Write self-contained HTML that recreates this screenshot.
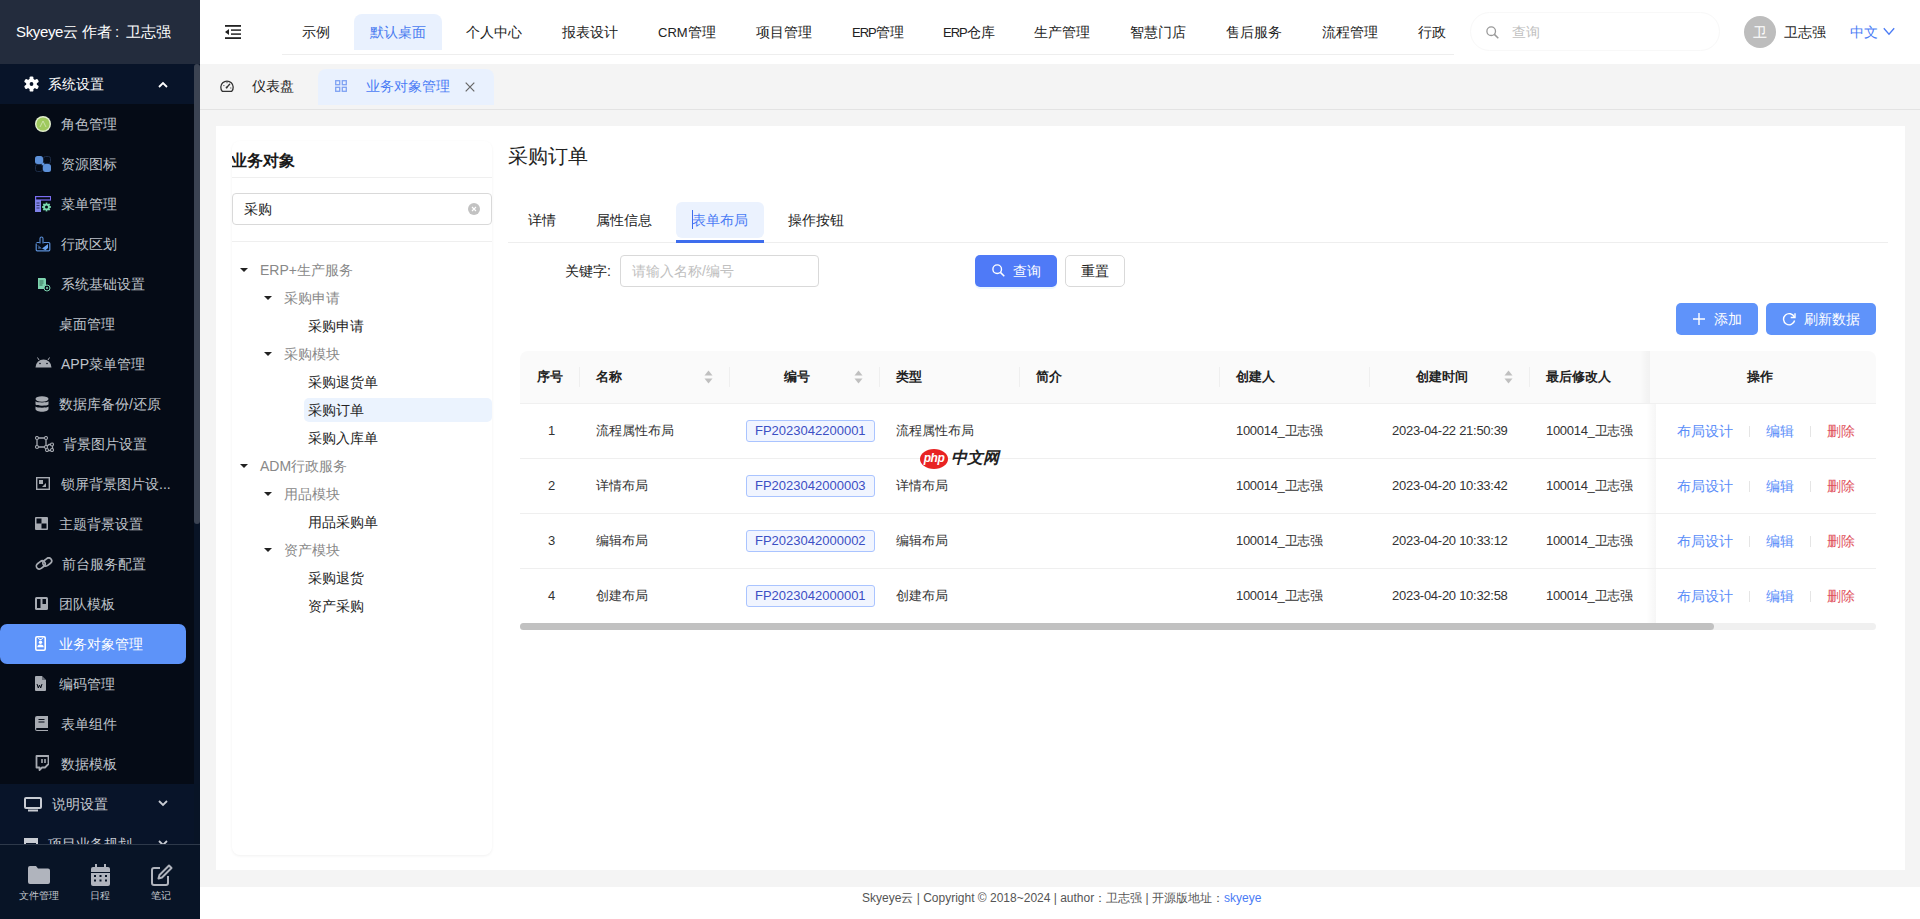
<!DOCTYPE html>
<html><head><meta charset="utf-8">
<style>
*{box-sizing:border-box;margin:0;padding:0}
html,body{width:1920px;height:919px;overflow:hidden;background:#f4f4f4;font-family:"Liberation Sans",sans-serif;font-size:14px;color:#333}
.abs{position:absolute}
.t{position:absolute;white-space:nowrap;line-height:20px}
svg{display:block}
/* sidebar */
#side{position:absolute;left:0;top:0;width:200px;height:919px;background:#081426;overflow:hidden}
#logo{position:absolute;left:0;top:0;width:200px;height:64px;background:#232c3d;color:#fff;font-size:15px;line-height:64px;padding-left:16px;white-space:nowrap}
#sub1{position:absolute;left:0;top:64px;width:194px;height:40px;background:#081429;color:#fff}
#items{position:absolute;left:0;top:104px;width:194px;height:680px;background:#050b16}
.it{position:absolute;left:0;width:194px;height:40px;color:#bfc3cb;line-height:40px;white-space:nowrap}
.it .tx{position:absolute;left:61px;top:0}
.it .ic{position:absolute;left:35px;top:12px;width:16px;height:16px}
.it.act{background:#5d93f9;color:#fff;width:186px;border-radius:7px}
#sbtrack{position:absolute;left:194px;top:64px;width:6px;height:720px;background:#091426}
#sbthumb{position:absolute;left:194px;top:64px;width:6px;height:460px;background:#3b4352;border-radius:3px}
.grp{position:absolute;left:0;width:194px;height:40px;background:#081429;color:#c8ccd3;line-height:40px}
#bot{position:absolute;left:0;top:844px;width:200px;height:75px;background:#081426;border-top:1px solid #2e394a}
.bi{position:absolute;top:45px;width:60px;text-align:center;color:#c5c9d0;font-size:9.5px;line-height:12px}
/* header */
#hdr{position:absolute;left:0;top:0;width:1920px;height:64px}
.nav{position:absolute;top:22px;color:#222;white-space:nowrap;line-height:20px}
#tabs{position:absolute;left:200px;top:64px;width:1720px;height:46px;background:#f4f4f4;border-bottom:1px solid #e3e3e3}
#main{position:absolute;left:216px;top:126px;width:1689px;height:744px;background:#fff}
#foot{position:absolute;left:200px;top:887px;width:1720px;height:32px;background:#fff}
.card{position:absolute;left:232px;top:141px;width:260px;height:714px;background:#fff;border-radius:8px;box-shadow:0 1px 3px rgba(0,0,0,.06);overflow:hidden}
.tn{position:absolute;white-space:nowrap;line-height:20px;color:#888}
.tl{position:absolute;white-space:nowrap;line-height:20px;color:#222}
.arr{position:absolute;width:0;height:0;border-left:4px solid transparent;border-right:4px solid transparent;border-top:4.5px solid #222}
.th{position:absolute;font-weight:bold;font-size:13px;color:#222;white-space:nowrap;line-height:20px;top:367px}
.td{position:absolute;font-size:13px;color:#333;white-space:nowrap;line-height:20px}
.cdiv{position:absolute;top:367px;width:1px;height:20px;background:#efefef}
.rline{position:absolute;left:520px;width:1356px;height:1px;background:#efefef}
.tag{position:absolute;left:746px;width:129px;height:22px;border:1px solid #aac4ff;background:#f1f5ff;border-radius:3px;color:#3c4fc4;font-size:13px;line-height:20px;padding-left:8px}
.sort{position:absolute;top:370px;width:9px;height:14px}
.lk{position:absolute;font-size:14px;color:#5b8ef9;white-space:nowrap;line-height:20px}
.dl{position:absolute;font-size:14px;color:#e0515c;white-space:nowrap;line-height:20px}
.vd{position:absolute;width:1px;height:11px;background:#e5e5e5}
.btn{position:absolute;border-radius:5px;color:#fff;white-space:nowrap}
</style></head><body>
<div id="side">
  <div id="logo"><span style="letter-spacing:-.35px">Skyeye</span>云<span style="margin-left:4px">作者</span><span style="display:inline-block;width:14px;padding-left:3px">:</span>卫志强</div>
  <div id="sub1">
    <svg class="abs" style="left:24px;top:76px;top:12px" width="15" height="16" viewBox="0 0 15 16"><g fill="#fff" transform="translate(7.5 8)"><circle r="5.4"/><rect x="-1.9" y="-7.6" width="3.8" height="15.2" rx="1.2"/><rect x="-1.9" y="-7.6" width="3.8" height="15.2" rx="1.2" transform="rotate(60)"/><rect x="-1.9" y="-7.6" width="3.8" height="15.2" rx="1.2" transform="rotate(120)"/></g><circle cx="7.5" cy="8" r="1.9" fill="#081429"/></svg>
    <div class="abs" style="left:48px;top:0;line-height:40px">系统设置</div>
    <svg class="abs" style="left:158px;top:17px" width="10" height="7" viewBox="0 0 10 7"><path d="M1 6L5 2L9 6" stroke="#fff" stroke-width="1.8" fill="none"/></svg>
  </div>
  <div id="items">
    <div class="it" style="top:0"><svg class="ic" viewBox="0 0 16 16"><circle cx="8" cy="8" r="8" fill="#e3efcf"/><circle cx="8" cy="8" r="6.6" fill="#9fc95e"/><path d="M5 11l3-6 3 6" stroke="#d7e9bd" stroke-width=".8" fill="none"/></svg><span class="tx">角色管理</span></div>
    <div class="it" style="top:40px"><svg class="ic" viewBox="0 0 16 16"><rect x="0" y="0" width="8" height="8" rx="2.5" fill="#5d91d9"/><rect x="8" y="8" width="8" height="8" rx="2.5" fill="#5d91d9"/><path d="M6 8L8 6L10 8L8 10z" fill="#5d91d9"/><rect x="8.5" y="0.5" width="7" height="7" rx="2" fill="none" stroke="#1d2d48"/><rect x="0.5" y="8.5" width="7" height="7" rx="2" fill="none" stroke="#1d2d48"/></svg><span class="tx">资源图标</span></div>
    <div class="it" style="top:80px"><svg class="ic" viewBox="0 0 16 16"><rect x="0.6" y="0.6" width="15" height="3.4" fill="none" stroke="#7a6df2" stroke-width="1.2"/><rect x="0" y="4" width="6" height="12" fill="#7f82e8"/><path d="M1.5 7h3M1.5 9.5h3M1.5 12h3" stroke="#2b2f5a" stroke-width=".9"/><g transform="translate(11.5 11)" fill="#7ad9b0"><circle r="3.3"/><rect x="-.9" y="-4.4" width="1.8" height="8.8"/><rect x="-.9" y="-4.4" width="1.8" height="8.8" transform="rotate(45)"/><rect x="-.9" y="-4.4" width="1.8" height="8.8" transform="rotate(90)"/><rect x="-.9" y="-4.4" width="1.8" height="8.8" transform="rotate(135)"/><circle r="1.5" fill="#050b16"/></g></svg><span class="tx">菜单管理</span></div>
    <div class="it" style="top:120px"><svg class="ic" viewBox="0 0 16 16"><path d="M1.5 6.5h3.2M8.5 6.5h5.3a1 1 0 0 1 1 1v6.3a1 1 0 0 1-1 1H2.2a1 1 0 0 1-1-1V7.5" fill="none" stroke="#5b8fd6" stroke-width="1.2"/><path d="M5 7.5V2.5a1.5 1.5 0 0 1 3 0v5" fill="none" stroke="#5b8fd6" stroke-width="1.1"/><path d="M7 12.5l6-4.5v4l-2.5 2.3z" fill="#6aa2ef"/><path d="M3 9.5l3 3M3 12h2.5" stroke="#5b8fd6" stroke-width=".9"/></svg><span class="tx">行政区划</span></div>
    <div class="it" style="top:160px"><svg class="ic" viewBox="0 0 16 16"><path d="M3 2h7l1 1v10H3z" fill="#7dd3ae"/><path d="M4.5 5h4M4.5 7h4M4.5 9h3" stroke="#2a5d4a" stroke-width=".9"/><circle cx="12" cy="12" r="3" fill="#050b16" stroke="#7dd3ae" stroke-width="1"/><circle cx="12" cy="12" r="1" fill="#7dd3ae"/></svg><span class="tx">系统基础设置</span></div>
    <div class="it" style="top:200px"><span class="tx" style="left:59px">桌面管理</span></div>
    <div class="it" style="top:240px"><svg class="ic" style="top:13px;width:17px;height:11px" viewBox="0 0 17 11"><path d="M0.5 10.5a8 8 0 0 1 16 0z" fill="#a7abb2"/><path d="M4 3L2.5 0.5M13 3l1.5-2.5" stroke="#a7abb2" stroke-width="1"/><circle cx="5" cy="6.5" r=".8" fill="#050b16"/><circle cx="12" cy="6.5" r=".8" fill="#050b16"/></svg><span class="tx">APP菜单管理</span></div>
    <div class="it" style="top:280px"><svg class="ic" style="top:12px;width:14px;height:16px" viewBox="0 0 14 16"><ellipse cx="7" cy="3" rx="6.5" ry="2.7" fill="#a7abb2"/><path d="M0.5 5.2c1 1.6 12 1.6 13 0v3.3c-1 1.6-12 1.6-13 0zM0.5 10.5c1 1.6 12 1.6 13 0v2.5c0 1.6-3 2.7-6.5 2.7S.5 14.6.5 13z" fill="#a7abb2"/></svg><span class="tx" style="left:59px">数据库备份/还原</span></div>
    <div class="it" style="top:320px"><svg class="ic" style="top:12px;width:19px;height:16px" viewBox="0 0 19 16"><path d="M2 2h9v9H2zM11 11l3-2.5h3.5v6H12" fill="none" stroke="#a7abb2" stroke-width="1.3"/><g fill="#050b16" stroke="#a7abb2" stroke-width="1.1"><circle cx="2" cy="2" r="1.5"/><circle cx="11" cy="2" r="1.5"/><circle cx="2" cy="11" r="1.5"/><circle cx="11" cy="11" r="1.5"/><circle cx="17" cy="8.5" r="1.5"/><circle cx="17" cy="14" r="1.5"/><circle cx="12" cy="14" r="1.5"/></g></svg><span class="tx" style="left:63px">背景图片设置</span></div>
    <div class="it" style="top:360px"><svg class="ic" style="left:36px;top:13px;width:14px;height:13px" viewBox="0 0 14 13"><rect x="0.7" y="0.7" width="12.6" height="11.6" fill="none" stroke="#a7abb2" stroke-width="1.4"/><rect x="3" y="3" width="4" height="4" fill="#a7abb2"/><path d="M6 10l4-4v4z" fill="#a7abb2"/></svg><span class="tx">锁屏背景图片设...</span></div>
    <div class="it" style="top:400px"><svg class="ic" style="top:13px;width:13px;height:13px" viewBox="0 0 13 13"><rect x="0" y="0" width="13" height="13" rx="1" fill="#a7abb2"/><rect x="1.5" y="1.5" width="5" height="5" fill="#050b16"/><rect x="6.5" y="6.5" width="5" height="5" fill="#050b16"/></svg><span class="tx" style="left:59px">主题背景设置</span></div>
    <div class="it" style="top:440px"><svg class="ic" style="top:13px;width:18px;height:13px" viewBox="0 0 18 13"><rect x="1" y="5" width="9.5" height="6" rx="3" transform="rotate(-38 5.75 8)" fill="none" stroke="#a7abb2" stroke-width="1.7"/><rect x="7.5" y="2" width="9.5" height="6" rx="3" transform="rotate(-38 12.25 5)" fill="none" stroke="#a7abb2" stroke-width="1.7"/></svg><span class="tx" style="left:62px">前台服务配置</span></div>
    <div class="it" style="top:480px"><svg class="ic" style="top:13px;width:13px;height:13px" viewBox="0 0 13 13"><rect x="0" y="0" width="13" height="13" rx="1.5" fill="#a7abb2"/><rect x="2" y="2" width="3.5" height="9" fill="#050b16"/><rect x="7.5" y="2" width="3.5" height="5" fill="#050b16"/></svg><span class="tx" style="left:59px">团队模板</span></div>
    <div class="it act" style="top:520px"><svg class="ic" style="top:12px;width:11px;height:15px" viewBox="0 0 11 15"><rect x="0.8" y="0.8" width="9.4" height="13.4" rx="1.2" fill="none" stroke="#fff" stroke-width="1.6"/><path d="M3 1.5l1.5 2h2l1.5-2" fill="none" stroke="#fff" stroke-width="1"/><circle cx="5.5" cy="6.3" r="1.7" fill="#fff"/><path d="M2.3 11.2a3.2 2.6 0 0 1 6.4 0z" fill="#fff"/></svg><span class="tx" style="left:59px">业务对象管理</span></div>
    <div class="it" style="top:560px"><svg class="ic" style="top:12px;width:11px;height:15px" viewBox="0 0 11 15"><path d="M0 1a1 1 0 0 1 1-1h6l4 4v10a1 1 0 0 1-1 1H1a1 1 0 0 1-1-1z" fill="#a7abb2"/><path d="M7 0v4h4" fill="#050b16" opacity=".4"/><path d="M2 8l1.3 4 1.2-3 1.2 3 1.3-4" fill="none" stroke="#050b16" stroke-width="1"/></svg><span class="tx" style="left:59px">编码管理</span></div>
    <div class="it" style="top:600px"><svg class="ic" style="top:12px;width:13px;height:15px" viewBox="0 0 13 15"><path d="M0 2a2 2 0 0 1 2-2h11v12H2a1 1 0 0 0 0 2h11v1H2a2 2 0 0 1-2-2z" fill="#a7abb2"/><path d="M3.5 3.5h6M3.5 6h6" stroke="#050b16" stroke-width="1.1"/></svg><span class="tx">表单组件</span></div>
    <div class="it" style="top:640px"><svg class="ic" style="top:11px;width:14px;height:16px" viewBox="0 0 14 16"><path d="M1.5 1h12v8l-3.5 3.5H7L4.5 15v-2.5H1.5z" fill="none" stroke="#a7abb2" stroke-width="1.8" stroke-linejoin="round"/><path d="M7 4v4M10 4v4" stroke="#a7abb2" stroke-width="1.6"/></svg><span class="tx">数据模板</span></div>
  </div>
  <div id="sbtrack"></div>
  <div id="sbthumb"></div>
  <div class="grp" style="top:784px"><svg class="abs" style="left:24px;top:13px" width="18" height="15" viewBox="0 0 18 15"><rect x="1" y="1" width="16" height="10" rx="1" fill="none" stroke="#c8ccd3" stroke-width="2"/><rect x="4" y="12.5" width="10" height="2" fill="#c8ccd3"/></svg><span class="abs" style="left:52px">说明设置</span><svg class="abs" style="left:158px;top:16px" width="10" height="7" viewBox="0 0 10 7"><path d="M1 1L5 5L9 1" stroke="#c8ccd3" stroke-width="1.8" fill="none"/></svg></div>
  <div class="grp" style="top:824px"><svg class="abs" style="left:24px;top:13px" width="16" height="14" viewBox="0 0 16 14"><rect x="0" y="1" width="14" height="3" fill="#c8ccd3"/><rect x="1" y="5" width="12" height="8" fill="none" stroke="#c8ccd3" stroke-width="2"/></svg><span class="abs" style="left:48px">项目业务规划</span><svg class="abs" style="left:158px;top:16px" width="10" height="7" viewBox="0 0 10 7"><path d="M1 1L5 5L9 1" stroke="#c8ccd3" stroke-width="1.8" fill="none"/></svg></div>
  <div id="bot">
    <svg class="abs" style="left:28px;top:21px" width="22" height="18" viewBox="0 0 22 18"><path d="M0 2a2 2 0 0 1 2-2h6l2 2.5h10a2 2 0 0 1 2 2V16a2 2 0 0 1-2 2H2a2 2 0 0 1-2-2z" fill="#b0b4bd"/></svg>
    <svg class="abs" style="left:91px;top:19px" width="19" height="22" viewBox="0 0 19 22"><rect x="4" y="0" width="2" height="4" fill="#b0b4bd"/><rect x="13" y="0" width="2" height="4" fill="#b0b4bd"/><path d="M0 5a2 2 0 0 1 2-2h15a2 2 0 0 1 2 2v3H0z" fill="#b0b4bd"/><path d="M0 9h19v11a2 2 0 0 1-2 2H2a2 2 0 0 1-2-2z" fill="#b0b4bd"/><g fill="#081426"><rect x="3" y="11" width="2" height="2"/><rect x="8.5" y="11" width="2" height="2"/><rect x="14" y="11" width="2" height="2"/><rect x="3" y="15.5" width="2" height="2"/><rect x="8.5" y="15.5" width="2" height="2"/><rect x="14" y="15.5" width="2" height="2"/></g></svg>
    <svg class="abs" style="left:151px;top:19px" width="22" height="22" viewBox="0 0 22 22"><path d="M9 4H3a2 2 0 0 0-2 2v13a2 2 0 0 0 2 2h12a2 2 0 0 0 2-2v-7" fill="none" stroke="#b0b4bd" stroke-width="2"/><path d="M18 1.5l2.5 2.5L11 13.5 7.5 14.5 8.5 11z" fill="none" stroke="#b0b4bd" stroke-width="2" stroke-linejoin="round"/></svg>
    <div class="bi" style="left:9px">文件管理</div>
    <div class="bi" style="left:70px">日程</div>
    <div class="bi" style="left:131px">笔记</div>
  </div>
</div>
<div id="hdr">
  <div class="abs" style="left:200px;top:0;width:1720px;height:64px;background:#fff"></div>
  <svg class="abs" style="left:225px;top:25px" width="16" height="14" viewBox="0 0 16 14"><rect x="0" y="0" width="16" height="1.8" fill="#222"/><rect x="6" y="4.3" width="10" height="1.6" fill="#333"/><rect x="6" y="8.3" width="10" height="1.6" fill="#333"/><rect x="0" y="12.2" width="16" height="1.8" fill="#222"/><path d="M0 7L4 4v6z" fill="#222"/></svg>
  <div class="abs" style="left:282px;top:54px;width:1172px;height:1px;background:#eeeeee"></div>
  <div class="abs" style="left:354px;top:14px;width:88px;height:36px;background:#e9f1fe;border-radius:8px 8px 0 0"></div>
  <div class="nav" style="left:302px">示例</div>
  <div class="nav" style="left:370px;color:#4a7cf0">默认桌面</div>
  <div class="nav" style="left:466px">个人中心</div>
  <div class="nav" style="left:562px">报表设计</div>
  <div class="nav" style="left:658px"><span style="font-size:13px">CRM</span>管理</div>
  <div class="nav" style="left:756px">项目管理</div>
  <div class="nav" style="left:852px"><span style="font-size:13px;letter-spacing:-1px">ERP</span>管理</div>
  <div class="nav" style="left:943px"><span style="font-size:13px;letter-spacing:-1px">ERP</span>仓库</div>
  <div class="nav" style="left:1034px">生产管理</div>
  <div class="nav" style="left:1130px">智慧门店</div>
  <div class="nav" style="left:1226px">售后服务</div>
  <div class="nav" style="left:1322px">流程管理</div>
  <div class="nav" style="left:1418px">行政</div>
  <div class="abs" style="left:1470px;top:12px;width:250px;height:39px;border:1px solid #f8f8f8;border-radius:20px"></div>
  <svg class="abs" style="left:1486px;top:26px" width="13" height="13" viewBox="0 0 13 13"><circle cx="5.2" cy="5.2" r="4.3" fill="none" stroke="#999" stroke-width="1.3"/><path d="M8.4 8.4L12.3 12.3" stroke="#999" stroke-width="1.5"/></svg>
  <div class="nav" style="left:1512px;color:#c0c0c0">查询</div>
  <div class="abs" style="left:1744px;top:16px;width:32px;height:32px;border-radius:50%;background:#bdbdbd;color:#fff;text-align:center;line-height:32px;font-size:14px">卫</div>
  <div class="nav" style="left:1784px;color:#1f1f1f">卫志强</div>
  <div class="nav" style="left:1850px;color:#4b7cf5">中文</div>
  <svg class="abs" style="left:1883px;top:27px" width="12" height="9" viewBox="0 0 12 9"><path d="M.8 1.2L6 7.2L11.2 1.2" stroke="#4b7cf5" stroke-width="1.3" fill="none"/></svg>
</div>
<div id="tabs">
  <svg class="abs" style="left:20px;top:15px" width="14" height="14" viewBox="0 0 14 14"><path d="M2.3 12.3A6.2 6.2 0 1 1 11.7 12.3z" fill="none" stroke="#333" stroke-width="1.3" stroke-linejoin="round"/><path d="M6.6 8.6L9.6 5.2" stroke="#333" stroke-width="1.4" stroke-linecap="round"/><circle cx="6.6" cy="8.6" r="1" fill="#333"/><path d="M3.4 6.6h1M7 3.2v1M10.3 9h1" stroke="#333" stroke-width="1"/></svg>
  <div class="t" style="left:52px;top:12px;color:#222">仪表盘</div>
  <div class="abs" style="left:118px;top:5px;width:176px;height:36px;background:#e9f1fe;border-radius:8px 8px 0 0"></div>
  <svg class="abs" style="left:135px;top:16px" width="12" height="12" viewBox="0 0 12 12"><g fill="none" stroke="#7fa2f3" stroke-width="1.3"><rect x=".7" y=".7" width="4" height="4"/><rect x="7.3" y=".7" width="4" height="4"/><rect x=".7" y="7.3" width="4" height="4"/><rect x="7.3" y="7.3" width="4" height="4"/></g></svg>
  <div class="t" style="left:166px;top:12px;color:#4b7cf5">业务对象管理</div>
  <svg class="abs" style="left:265px;top:18px" width="10" height="10" viewBox="0 0 10 10"><path d="M.7 .7l8.6 8.6M9.3 .7L.7 9.3" stroke="#666" stroke-width="1.2"/></svg>
</div>
<div id="main"></div>
<div class="card">
  <div class="t" style="left:-1px;top:9px;font-size:16px;font-weight:bold;color:#1a1a1a;line-height:22px">业务对象</div>
  <div class="abs" style="left:0;top:36px;width:260px;height:1px;background:#efefef"></div>
  <div class="abs" style="left:0;top:52px;width:260px;height:32px;border:1px solid #d9d9d9;border-radius:4px"></div>
  <div class="t" style="left:12px;top:58px;color:#222">采购</div>
  <div class="abs" style="left:236px;top:62px;width:12px;height:12px;border-radius:50%;background:#c2c2c2"></div>
  <svg class="abs" style="left:239px;top:65px" width="6" height="6" viewBox="0 0 6 6"><path d="M1 1l4 4M5 1L1 5" stroke="#fff" stroke-width="1.1"/></svg>
  <div class="abs" style="left:0;top:100px;width:260px;height:1px;background:#efefef"></div>
  <div class="abs" style="left:72px;top:257px;width:188px;height:24px;background:#ebf3fe;border-radius:5px"></div>
</div>
<div class="abs" style="left:232px;top:262px">
  <div class="arr" style="left:8px;top:5.5px"></div><div class="tn" style="left:28px;top:-2px">ERP+生产服务</div>
  <div class="arr" style="left:32px;top:33.5px"></div><div class="tn" style="left:52px;top:26px">采购申请</div>
  <div class="tl" style="left:76px;top:54px">采购申请</div>
  <div class="arr" style="left:32px;top:89.5px"></div><div class="tn" style="left:52px;top:82px">采购模块</div>
  <div class="tl" style="left:76px;top:110px">采购退货单</div>
  <div class="tl" style="left:76px;top:138px">采购订单</div>
  <div class="tl" style="left:76px;top:166px">采购入库单</div>
  <div class="arr" style="left:8px;top:201.5px"></div><div class="tn" style="left:28px;top:194px">ADM行政服务</div>
  <div class="arr" style="left:32px;top:229.5px"></div><div class="tn" style="left:52px;top:222px">用品模块</div>
  <div class="tl" style="left:76px;top:250px">用品采购单</div>
  <div class="arr" style="left:32px;top:285.5px"></div><div class="tn" style="left:52px;top:278px">资产模块</div>
  <div class="tl" style="left:76px;top:306px">采购退货</div>
  <div class="tl" style="left:76px;top:334px">资产采购</div>
</div>

<div class="t" style="left:508px;top:143px;font-size:20px;line-height:26px;color:#222">采购订单</div>
<div class="abs" style="left:508px;top:242px;width:1380px;height:1px;background:#eeeeee"></div>
<div class="abs" style="left:676px;top:202px;width:88px;height:36px;background:#ebf2fe;border-radius:6px"></div>
<div class="abs" style="left:676px;top:240px;width:88px;height:2.5px;background:#3e6ded"></div>
<div class="t" style="left:528px;top:210px;color:#222">详情</div>
<div class="t" style="left:596px;top:210px;color:#222">属性信息</div>
<div class="abs" style="left:692px;top:210px;width:1px;height:19px;background:#3e6ded"></div>
<div class="t" style="left:692px;top:210px;color:#4b7cf5">表单布局</div>
<div class="t" style="left:788px;top:210px;color:#222">操作按钮</div>

<div class="t" style="left:565px;top:261px;color:#222">关键字:</div>
<div class="abs" style="left:620px;top:255px;width:199px;height:32px;border:1px solid #d9d9d9;border-radius:4px"></div>
<div class="t" style="left:632px;top:261px;color:#c0c0c0">请输入名称/编号</div>
<div class="btn" style="left:975px;top:255px;width:82px;height:32px;background:#4f7af7;box-shadow:0 2px 0 rgba(5,145,255,.08)"></div>
<svg class="abs" style="left:992px;top:264px" width="13" height="13" viewBox="0 0 13 13"><circle cx="5.2" cy="5.2" r="4.3" fill="none" stroke="#fff" stroke-width="1.4"/><path d="M8.4 8.4L12.3 12.3" stroke="#fff" stroke-width="1.5"/></svg>
<div class="t" style="left:1013px;top:261px;color:#fff">查询</div>
<div class="abs" style="left:1065px;top:255px;width:60px;height:32px;border:1px solid #d9d9d9;border-radius:5px;background:#fff"></div>
<div class="t" style="left:1081px;top:261px;color:#222">重置</div>

<div class="btn" style="left:1676px;top:303px;width:82px;height:32px;background:#5f93fa"></div>
<svg class="abs" style="left:1693px;top:313px" width="12" height="12" viewBox="0 0 12 12"><path d="M6 0v12M0 6h12" stroke="#fff" stroke-width="1.4"/></svg>
<div class="t" style="left:1714px;top:309px;color:#fff">添加</div>
<div class="btn" style="left:1766px;top:303px;width:110px;height:32px;background:#5f93fa"></div>
<svg class="abs" style="left:1782px;top:312px" width="14" height="14" viewBox="0 0 14 14"><path d="M12.3 5A5.6 5.6 0 1 0 12.6 8.5" fill="none" stroke="#fff" stroke-width="1.4"/><path d="M13 1.2v4.3H8.7" fill="none" stroke="#fff" stroke-width="1.4"/></svg>
<div class="t" style="left:1804px;top:309px;color:#fff">刷新数据</div>
<div class="abs" style="left:520px;top:351px;width:1356px;height:53px;background:#fafafa;border-radius:8px 8px 0 0;border-bottom:1px solid #f0f0f0"></div>
<div class="abs" style="left:1640px;top:351px;width:10px;height:52px;background:linear-gradient(to right,rgba(0,0,0,0),rgba(0,0,0,.035))"></div>
<div class="abs" style="left:1646px;top:404px;width:10px;height:219px;background:linear-gradient(to right,rgba(0,0,0,0),rgba(0,0,0,.035))"></div>
<div class="cdiv" style="left:579px"></div>
<div class="cdiv" style="left:729px"></div>
<div class="cdiv" style="left:879px"></div>
<div class="cdiv" style="left:1019px"></div>
<div class="cdiv" style="left:1219px"></div>
<div class="cdiv" style="left:1369px"></div>
<div class="cdiv" style="left:1529px"></div>
<div class="th" style="left:537px">序号</div>
<div class="th" style="left:596px">名称</div>
<div class="th" style="left:784px">编号</div>
<div class="th" style="left:896px">类型</div>
<div class="th" style="left:1036px">简介</div>
<div class="th" style="left:1236px">创建人</div>
<div class="th" style="left:1416px">创建时间</div>
<div class="th" style="left:1546px">最后修改人</div>
<div class="th" style="left:1747px">操作</div>
<div class="sort" style="left:704px"><svg width="9" height="14" viewBox="0 0 9 14"><path d="M4.5 0.5L8.5 5.5H0.5z" fill="#bfbfbf"/><path d="M4.5 13.5L8.5 8.5H0.5z" fill="#bfbfbf"/></svg></div>
<div class="sort" style="left:854px"><svg width="9" height="14" viewBox="0 0 9 14"><path d="M4.5 0.5L8.5 5.5H0.5z" fill="#bfbfbf"/><path d="M4.5 13.5L8.5 8.5H0.5z" fill="#bfbfbf"/></svg></div>
<div class="sort" style="left:1504px"><svg width="9" height="14" viewBox="0 0 9 14"><path d="M4.5 0.5L8.5 5.5H0.5z" fill="#bfbfbf"/><path d="M4.5 13.5L8.5 8.5H0.5z" fill="#bfbfbf"/></svg></div>
<div class="rline" style="top:458px"></div>
<div class="td" style="left:548px;top:421px">1</div>
<div class="td" style="left:596px;top:421px">流程属性布局</div>
<div class="tag" style="top:420px">FP2023042200001</div>
<div class="td" style="left:896px;top:421px">流程属性布局</div>
<div class="td" style="left:1236px;top:421px;letter-spacing:-.3px">100014_卫志强</div>
<div class="td" style="left:1392px;top:421px;letter-spacing:-.27px">2023-04-22 21:50:39</div>
<div class="td" style="left:1546px;top:421px;letter-spacing:-.3px">100014_卫志强</div>
<div class="lk" style="left:1677px;top:421px">布局设计</div>
<div class="vd" style="left:1749px;top:426px"></div>
<div class="lk" style="left:1766px;top:421px">编辑</div>
<div class="vd" style="left:1810px;top:426px"></div>
<div class="dl" style="left:1827px;top:421px">删除</div>
<div class="rline" style="top:513px"></div>
<div class="td" style="left:548px;top:476px">2</div>
<div class="td" style="left:596px;top:476px">详情布局</div>
<div class="tag" style="top:475px">FP2023042000003</div>
<div class="td" style="left:896px;top:476px">详情布局</div>
<div class="td" style="left:1236px;top:476px;letter-spacing:-.3px">100014_卫志强</div>
<div class="td" style="left:1392px;top:476px;letter-spacing:-.27px">2023-04-20 10:33:42</div>
<div class="td" style="left:1546px;top:476px;letter-spacing:-.3px">100014_卫志强</div>
<div class="lk" style="left:1677px;top:476px">布局设计</div>
<div class="vd" style="left:1749px;top:481px"></div>
<div class="lk" style="left:1766px;top:476px">编辑</div>
<div class="vd" style="left:1810px;top:481px"></div>
<div class="dl" style="left:1827px;top:476px">删除</div>
<div class="rline" style="top:568px"></div>
<div class="td" style="left:548px;top:531px">3</div>
<div class="td" style="left:596px;top:531px">编辑布局</div>
<div class="tag" style="top:530px">FP2023042000002</div>
<div class="td" style="left:896px;top:531px">编辑布局</div>
<div class="td" style="left:1236px;top:531px;letter-spacing:-.3px">100014_卫志强</div>
<div class="td" style="left:1392px;top:531px;letter-spacing:-.27px">2023-04-20 10:33:12</div>
<div class="td" style="left:1546px;top:531px;letter-spacing:-.3px">100014_卫志强</div>
<div class="lk" style="left:1677px;top:531px">布局设计</div>
<div class="vd" style="left:1749px;top:536px"></div>
<div class="lk" style="left:1766px;top:531px">编辑</div>
<div class="vd" style="left:1810px;top:536px"></div>
<div class="dl" style="left:1827px;top:531px">删除</div>
<div class="td" style="left:548px;top:586px">4</div>
<div class="td" style="left:596px;top:586px">创建布局</div>
<div class="tag" style="top:585px">FP2023042000001</div>
<div class="td" style="left:896px;top:586px">创建布局</div>
<div class="td" style="left:1236px;top:586px;letter-spacing:-.3px">100014_卫志强</div>
<div class="td" style="left:1392px;top:586px;letter-spacing:-.27px">2023-04-20 10:32:58</div>
<div class="td" style="left:1546px;top:586px;letter-spacing:-.3px">100014_卫志强</div>
<div class="lk" style="left:1677px;top:586px">布局设计</div>
<div class="vd" style="left:1749px;top:591px"></div>
<div class="lk" style="left:1766px;top:586px">编辑</div>
<div class="vd" style="left:1810px;top:591px"></div>
<div class="dl" style="left:1827px;top:586px">删除</div>
<div class="abs" style="left:520px;top:623px;width:1356px;height:7px;background:#f0f0f0;border-radius:4px"></div>
<div class="abs" style="left:520px;top:623px;width:1194px;height:7px;background:#c1c1c1;border-radius:4px"></div>
<div class="abs" style="left:920px;top:449px;width:28px;height:20px;border-radius:50%;background:#e82323;color:#fff;font-size:12px;font-style:italic;font-weight:bold;line-height:19px;text-align:center;letter-spacing:-.5px">php</div>
<div class="t" style="left:951px;top:448px;font-size:16px;font-weight:bold;font-style:italic;color:#222">中文网</div>
<div id="foot"><div class="t" style="left:662px;top:1px;font-size:12px;color:#555">Skyeye云 | Copyright © 2018~2024 | author：卫志强 | 开源版地址：<span style="color:#4b7cf5">skyeye</span></div></div>
</body></html>
